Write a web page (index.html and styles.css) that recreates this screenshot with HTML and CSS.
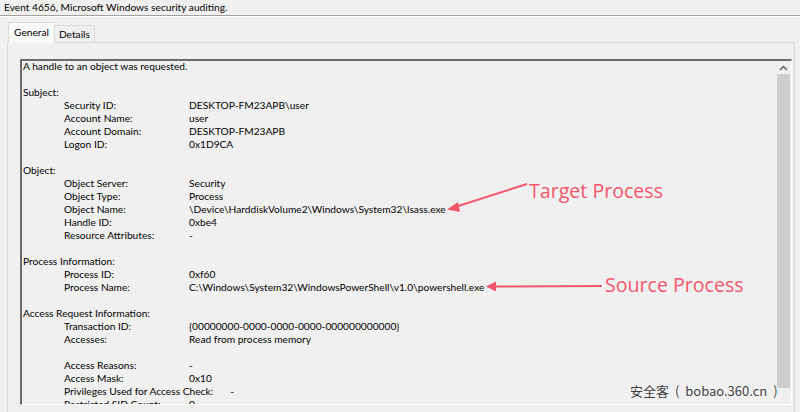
FILE: index.html
```html
<!DOCTYPE html>
<html lang="en">
<head>
    <meta charset="UTF-8">
    <title>Event 4656</title>
    <link rel="stylesheet" href="styles.css">
</head>
<body>
    <div class="title">Event 4656, Microsoft Windows security auditing.</div>

    <div class="tabs">
        <div class="tab active">General</div>
        <div class="tab">Details</div>
    </div>

    <div class="panel">
        <div class="box">
            <div class="text">
                <div class="line">A handle to an object was requested.</div>
                <div class="gap"></div>

                <div class="line">Subject:</div>
                <div class="row"><span class="k">Security ID:</span><span>DESKTOP-FM23APB\user</span></div>
                <div class="row"><span class="k">Account Name:</span><span>user</span></div>
                <div class="row"><span class="k">Account Domain:</span><span>DESKTOP-FM23APB</span></div>
                <div class="row"><span class="k">Logon ID:</span><span>0x1D9CA</span></div>
                <div class="gap"></div>

                <div class="line">Object:</div>
                <div class="row"><span class="k">Object Server:</span><span>Security</span></div>
                <div class="row"><span class="k">Object Type:</span><span>Process</span></div>
                <div class="row"><span class="k">Object Name:</span><span>\Device\HarddiskVolume2\Windows\System32\lsass.exe</span></div>
                <div class="row"><span class="k">Handle ID:</span><span>0xbe4</span></div>
                <div class="row"><span class="k">Resource Attributes:</span><span>-</span></div>
                <div class="gap"></div>

                <div class="line">Process Information:</div>
                <div class="row"><span class="k">Process ID:</span><span>0xf60</span></div>
                <div class="row"><span class="k">Process Name:</span><span>C:\Windows\System32\WindowsPowerShell\v1.0\powershell.exe</span></div>
                <div class="gap"></div>

                <div class="line">Access Request Information:</div>
                <div class="row"><span class="k">Transaction ID:</span><span>{00000000-0000-0000-0000-000000000000}</span></div>
                <div class="row"><span class="k">Accesses:</span><span>Read from process memory</span></div>
                <div class="gap"></div>
                <div class="row"><span class="k">Access Reasons:</span><span>-</span></div>
                <div class="row"><span class="k">Access Mask:</span><span>0x10</span></div>
                <div class="row"><span class="k wide">Privileges Used for Access Check:</span><span>-</span></div>
                <div class="row"><span class="k">Restricted SID Count:</span><span>0</span></div>
            </div>

            <div class="scrollbar">
                <div class="arrow">
                    <svg width="9" height="6" viewBox="0 0 9 6"><path d="M1 5 L4.5 1.5 L8 5" fill="none" stroke="#606060" stroke-width="1.5"/></svg>
                </div>
                <div class="thumb"></div>
            </div>
        </div>
    </div>

    <!-- callouts drawn over the screenshot -->
    <svg class="arrows" width="800" height="412" viewBox="0 0 800 412">
        <g stroke="#f4566b" stroke-width="2" fill="#f4566b">
            <line x1="527" y1="184" x2="455" y2="207"/>
            <path d="M447 209.5 L458 202 L460 212 Z" stroke="none"/>
            <line x1="602" y1="286" x2="494" y2="286.5"/>
            <path d="M486 286.5 L496 281.5 L496 291.5 Z" stroke="none"/>
        </g>
    </svg>
    <div class="callout target">Target Process</div>
    <div class="callout source">Source Process</div>

    <div class="watermark">安全客 ( bobao.360.cn )</div>
</body>
</html>
```

FILE: styles.css
```css
body {
    margin: 0;
    width: 800px;
    height: 412px;
    overflow: hidden;
    background-color: #f0f0f0;
    font-family: Lato, "Noto Sans", sans-serif;
    font-size: 10.2px;
    color: #000;
    position: relative;
}

.title {
    height: 15px;
    line-height: 14px;
    padding-left: 4px;
    border-bottom: 1px solid #a0a0a0;
    box-shadow: 0 1px 0 #ffffff;
}

.tabs {
    display: flex;
    align-items: flex-end;
    height: 26px;
    padding-left: 8px;
}

.tab {
    height: 16px;
    line-height: 17px;
    padding: 0 4px;
    border: 1px solid #d9d9d9;
    border-bottom: none;
    background-color: #f0f0f0;
}

.tab.active {
    height: 20px;
    line-height: 18px;
    padding: 0 5px;
    background-color: #fafafa;
    border-right: none;
    position: relative;
    top: 1px;
}

.panel {
    margin: 0 5px 0 7px;
    height: 367px;
    border: 1px solid #d9d9d9;
    padding: 16px 0 0 12px;
}

.box {
    display: flex;
    height: 343px;
    margin-right: 2px;
    border-top: 2px solid #6b6b6b;
    border-left: 2px solid #6b6b6b;
    border-right: 1px solid #ffffff;
    border-bottom: 1px solid #ffffff;
    overflow: hidden;
}

.text {
    flex: 1;
    margin-top: -1px;
    padding: 0 0 0 1px;
    line-height: 13px;
    white-space: nowrap;
}

.gap {
    height: 13px;
}

.row {
    display: flex;
    padding-left: 41px;
}

.k {
    min-width: 125px;
    flex-shrink: 0;
}

.k.wide {
    padding-right: 17px;
}

.scrollbar {
    width: 13px;
    margin: 0 1px 0 0;
    display: flex;
    flex-direction: column;
}

.arrow {
    height: 13px;
    display: flex;
    align-items: center;
    justify-content: center;
}

.thumb {
    flex: 1;
    margin-bottom: 16px;
    background-color: #cdcdcd;
}

.arrows {
    position: absolute;
    left: 0;
    top: 0;
}

.callout {
    position: absolute;
    color: #f4566b;
    font-family: "Open Sans", sans-serif;
    font-size: 19.6px;
    line-height: 22px;
}

.callout.target {
    left: 529px;
    top: 180px;
}

.callout.source {
    left: 605px;
    top: 274px;
}

.watermark {
    position: absolute;
    left: 630px;
    top: 382px;
    font-family: "Noto Sans CJK SC", "Noto Sans", sans-serif;
    font-size: 13px;
    line-height: 18px;
    word-spacing: 3px;
    color: #3c3c3c;
    text-shadow: 0 0 2px #ffffff, 0 0 1px #ffffff;
}
```
